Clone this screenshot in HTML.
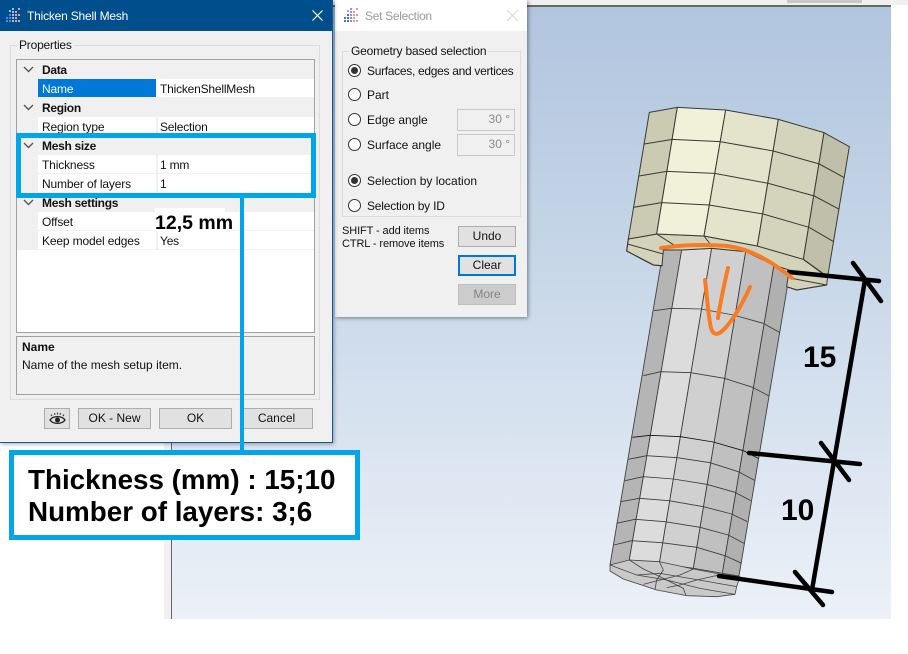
<!DOCTYPE html>
<html lang="en">
<head>
<meta charset="utf-8">
<title>Thicken Shell Mesh</title>
<style>
html,body{margin:0;padding:0;background:#fff;}
body{position:relative;width:908px;height:654px;overflow:hidden;font-family:"Liberation Sans",sans-serif;font-size:12px;color:#111;}
.a{position:absolute;box-sizing:border-box;white-space:nowrap;}
.t{position:absolute;white-space:nowrap;line-height:14px;}
.row{position:absolute;left:0;width:297px;height:19px;background:#fff;border-bottom:1px solid #f0f0f0;box-sizing:border-box;}
.row.h{background:#f0f0f0;border:0;}
.row .g{position:absolute;left:0;top:0;width:21px;height:19px;background:#f0f0f0;}
.row .n{position:absolute;left:25px;top:3px;line-height:14px;white-space:nowrap;letter-spacing:-.15px;}
.row .v{position:absolute;left:143px;top:3px;line-height:14px;white-space:nowrap;letter-spacing:-.2px;}
.row .d{position:absolute;left:139px;top:0;width:2px;height:18px;background:#f0f0f0;}
.row.h b{position:absolute;left:25px;top:3px;line-height:14px;white-space:nowrap;letter-spacing:-.3px;}
.row.h svg{position:absolute;left:6px;top:6px;}
.btn{position:absolute;box-sizing:border-box;background:#e1e1e1;border:1px solid #adadad;text-align:center;line-height:19px;white-space:nowrap;}
.radio{position:absolute;box-sizing:border-box;width:13px;height:13px;border-radius:50%;background:#fff;border:1px solid #333;}
.radio.on:after{content:"";position:absolute;left:2px;top:2px;width:7px;height:7px;border-radius:50%;background:#333;}
.inp{position:absolute;left:122px;box-sizing:border-box;width:58px;height:22px;border:1px solid #c8c8c8;background:#f0f0f0;color:#8a8a8a;text-align:right;padding-right:4px;line-height:19px;}
</style>
</head>
<body>

<!-- application chrome -->
<div class="a" style="left:0;top:0;width:908px;height:5px;background:#f0f0f0;"></div>
<div class="a" style="left:787px;top:0;width:75px;height:3px;background:#c8c8c8;"></div>
<div class="a" style="left:164px;top:5px;width:727px;height:2px;background:#666;"></div>
<div class="a" style="left:164px;top:5px;width:7px;height:614px;background:#f0f0f0;"></div>
<div class="a" style="left:171px;top:5px;width:1px;height:614px;background:#666;"></div>
<div class="a" style="left:172px;top:7px;width:719px;height:612px;background:linear-gradient(#b1c5df,#c9d8e9 45%,#ecf1f8);"></div>

<!-- 3D model and annotations -->
<svg class="a" style="left:0;top:0;" width="908" height="654" viewBox="0 0 908 654">
  <!-- shaft -->
  <g transform="translate(590,290) scale(.33333)" stroke="#3c3c3c" stroke-width="2.600" stroke-linejoin="round">
    <polygon fill="#b5b5b5" points="220,-120 275,-120 117,815 60,825"/>
    <polygon fill="#dcdcdc" points="275,-120 365,-125 208,820 117,815"/>
    <polygon fill="#d0d0d0" points="365,-125 467,-115 310,835 208,820"/>
    <polygon fill="#c0c0c0" points="467,-115 552,-75 397,850 310,835"/>
    <polygon fill="#b0b0b0" points="552,-75 597,-40 447,858 397,850"/>
    <g fill="none">
      <polyline points="192,62 245,55 333,57 430,75 520,100 570,128"/>
      <polyline points="160,257 212,245 302,248 403,265 488,292 537,318"/>
      <polyline stroke="#111" points="127,442 180,436 272,440 370,456 460,482 505,505"/>
      <polyline points="115,508 170,497 262,503 360,518 445,545 495,572"/>
      <polyline points="105,572 160,560 250,567 350,583 435,607 482,632"/>
      <polyline points="92,635 148,625 237,632 340,650 425,672 472,695"/>
      <polyline points="80,700 135,688 225,695 330,712 415,735 462,760"/>
      <polyline points="72,765 125,752 215,758 320,772 405,797 455,820"/>
    </g>
  </g>
  <!-- shaft end cap -->
  <g transform="translate(600,555) scale(.33333)" stroke="#444" stroke-width="2.400" fill="none" stroke-linejoin="round">
    <polygon fill="#c9c9c9" points="30,30 88,15 178,20 280,42 365,58 420,65 410,95 405,118 350,125 260,122 170,105 70,72 30,48"/>
    <polyline points="30,30 110,60 200,75 300,100 405,118"/>
    <polyline points="88,15 130,42 180,65 250,100 258,122"/>
    <polyline points="178,20 190,45 170,75 165,103"/>
    <polyline points="280,42 240,60 180,75 130,88"/>
    <polyline points="365,58 290,75 240,90 200,98"/>
    <polyline points="110,60 180,55 280,72 410,95"/>
  </g>
  <!-- head -->
  <g transform="translate(600,90) scale(.33333)" stroke="#3a3a32" stroke-width="3" stroke-linejoin="round">
    <polygon fill="#d3d2bb" points="85,447 170,432 312,438 472,468 610,508 683,560 680,585 590,600 560,590 567,540 522,525 438,485 336,475 245,480 190,480 186,527 160,525 80,483"/>
    <polygon fill="#cbcab3" points="148,67 232,52 170,432 85,447"/>
    <polygon fill="#f1f1d9" points="232,52 377,60 312,438 170,432"/>
    <polygon fill="#e4e4cd" points="377,60 535,88 472,468 312,438"/>
    <polygon fill="#d4d4bd" points="535,88 672,128 610,508 472,468"/>
    <polygon fill="#c0bfaa" points="672,128 748,170 683,560 610,508"/>
    <g fill="none">
      <polyline points="133,162 217,148 360,155 520,183 658,222 733,263"/>
      <polyline points="117,258 200,244 344,250 505,280 643,318 718,358"/>
      <polyline points="100,352 185,338 327,345 489,372 627,412 701,455"/>
      <polyline points="85,447 80,483 160,525 188,528"/>
      <polyline points="82,462 190,492"/>
      <polyline points="170,432 230,470"/>
      <polyline points="312,438 335,468"/>
      <polyline points="610,508 680,560"/>
      <polyline points="575,565 680,585"/>
      <polyline points="560,590 590,600 680,585"/>
    </g>
  </g>
  <!-- black dimension lines -->
  <g stroke="#000" stroke-width="4.500" stroke-linecap="round" fill="none">
    <line x1="789" y1="272" x2="879" y2="281"/>
    <line x1="853" y1="263" x2="881" y2="301"/>
    <line x1="865" y1="280" x2="812" y2="590"/>
    <line x1="749" y1="453" x2="860" y2="464"/>
    <line x1="821" y1="443" x2="849" y2="480"/>
    <line x1="719" y1="576" x2="832" y2="592"/>
    <line x1="795" y1="572" x2="823" y2="605"/>
  </g>
  <!-- orange markup -->
  <g stroke="#f97c22" stroke-width="4" stroke-linecap="round" stroke-linejoin="round" fill="none">
    <path d="M661,248 C680,245 705,244 727,246 C750,249 770,260 792,278"/>
    <path d="M705,280 C707,295 708,315 711,328 C713,335 717,335 721,332 C730,325 742,305 750,287"/>
    <path d="M728,268 C724,285 720,305 718,318"/>
  </g>
  <text x="803" y="367" font-family="Liberation Sans" font-weight="700" font-size="30" fill="#000">15</text>
  <text x="781" y="520" font-family="Liberation Sans" font-weight="700" font-size="30" fill="#000">10</text>
</svg>

<!-- Set Selection dialog -->
<div class="a" style="left:335px;top:0;width:192px;height:317px;background:#f0f0f0;box-shadow:1px 1px 4px rgba(0,0,0,.45);">
  <div class="a" style="left:0;top:0;width:192px;height:31px;background:#fff;"></div>
  <svg class="a" style="left:9px;top:7px;" width="16" height="16" viewBox="0 0 16 16">
    <g fill="#4a6fc0"><rect x="0" y="10" width="2" height="2"/><rect x="0" y="13" width="2" height="2"/><rect x="3" y="7" width="2" height="2"/><rect x="3" y="10" width="2" height="2"/><rect x="3" y="13" width="2" height="2"/><rect x="3" y="3" width="2" height="2" fill="#8fa8dd"/></g>
    <g fill="#9c8fc8"><rect x="6" y="1" width="2" height="2"/><rect x="6" y="4" width="2" height="2"/><rect x="6" y="7" width="2" height="2"/><rect x="6" y="10" width="2" height="2"/><rect x="6" y="13" width="2" height="2"/></g>
    <g fill="#dc9aa0"><rect x="9" y="4" width="2" height="2"/><rect x="9" y="7" width="2" height="2"/><rect x="9" y="10" width="2" height="2"/><rect x="9" y="13" width="2" height="2"/><rect x="12" y="1" width="2" height="2"/><rect x="12" y="7" width="2" height="2"/><rect x="12" y="13" width="2" height="2"/></g>
  </svg>
  <div class="t" style="left:30px;top:9px;color:#9a9a9a;letter-spacing:-.3px;">Set Selection</div>
  <svg class="a" style="left:171px;top:9px;" width="13" height="13" viewBox="0 0 13 13"><path d="M1 1L12 12M12 1L1 12" stroke="#dcdcdc" stroke-width="1.200"/></svg>
  <div class="a" style="left:7px;top:51px;width:179px;height:166px;border:1px solid #dcdcdc;"></div>
  <div class="t" style="left:14px;top:44px;background:#f0f0f0;padding:0 2px;letter-spacing:-.17px;">Geometry based selection</div>
  <div class="radio on" style="left:13px;top:64px;"></div><div class="t" style="left:32px;top:64px;letter-spacing:-.3px;">Surfaces, edges and vertices</div>
  <div class="radio" style="left:13px;top:88px;"></div><div class="t" style="left:32px;top:88px;">Part</div>
  <div class="radio" style="left:13px;top:113px;"></div><div class="t" style="left:32px;top:113px;">Edge angle</div>
  <div class="inp" style="top:109px;">30 °</div>
  <div class="radio" style="left:13px;top:138px;"></div><div class="t" style="left:32px;top:138px;">Surface angle</div>
  <div class="inp" style="top:134px;">30 °</div>
  <div class="radio on" style="left:13px;top:174px;"></div><div class="t" style="left:32px;top:174px;">Selection by location</div>
  <div class="radio" style="left:13px;top:199px;"></div><div class="t" style="left:32px;top:199px;letter-spacing:-.2px;">Selection by ID</div>
  <div class="t" style="left:7px;top:225px;line-height:13px;font-size:11px;letter-spacing:-.1px;">SHIFT - add items<br>CTRL - remove items</div>
  <div class="btn" style="left:123px;top:226px;width:58px;height:21px;">Undo</div>
  <div class="btn" style="left:123px;top:255px;width:58px;height:21px;border:2px solid #0078d7;line-height:17px;">Clear</div>
  <div class="btn" style="left:123px;top:284px;width:58px;height:21px;background:#ccc;border-color:#bfbfbf;color:#838383;">More</div>
</div>

<!-- Thicken Shell Mesh dialog -->
<div class="a" style="left:0;top:0;width:333px;height:443px;background:#f0f0f0;border-right:1px solid #0a5c9e;border-bottom:1px solid #0a5c9e;box-shadow:1px 1px 4px rgba(0,0,0,.35);">
  <div class="a" style="left:0;top:0;width:332px;height:31px;background:#004e8c;"></div>
  <svg class="a" style="left:6px;top:7px;" width="16" height="16" viewBox="0 0 16 16">
    <g fill="#5d86d8"><rect x="0" y="10" width="2" height="2"/><rect x="0" y="13" width="2" height="2"/><rect x="3" y="7" width="2" height="2"/><rect x="3" y="10" width="2" height="2"/><rect x="3" y="13" width="2" height="2"/><rect x="3" y="3" width="2" height="2" fill="#a8bfe8"/></g>
    <g fill="#b6b2df"><rect x="6" y="1" width="2" height="2"/><rect x="6" y="4" width="2" height="2"/><rect x="6" y="7" width="2" height="2"/><rect x="6" y="10" width="2" height="2"/><rect x="6" y="13" width="2" height="2"/></g>
    <g fill="#e0a0a6"><rect x="9" y="4" width="2" height="2"/><rect x="9" y="7" width="2" height="2"/><rect x="9" y="10" width="2" height="2"/><rect x="9" y="13" width="2" height="2"/><rect x="12" y="1" width="2" height="2"/><rect x="12" y="7" width="2" height="2"/><rect x="12" y="13" width="2" height="2"/></g>
  </svg>
  <div class="t" style="left:27px;top:9px;color:#fff;letter-spacing:-.2px;">Thicken Shell Mesh</div>
  <svg class="a" style="left:311px;top:9px;" width="13" height="13" viewBox="0 0 13 13"><path d="M1.500 1.500L11.500 11.500M11.500 1.500L1.500 11.500" stroke="#fff" stroke-width="1.200"/></svg>

  <div class="a" style="left:10px;top:45px;width:310px;height:355px;border:1px solid #dcdcdc;"></div>
  <div class="t" style="left:17px;top:38px;background:#f0f0f0;padding:0 2px;letter-spacing:-.2px;">Properties</div>

  <div class="a" style="left:16px;top:59px;width:299px;height:274px;background:#fff;border:1px solid #a0a0a0;">
    <div class="row h" style="top:0;"><svg width="11" height="7" viewBox="0 0 11 7"><path d="M1 1L5.500 5.500L10 1" fill="none" stroke="#555" stroke-width="1.400"/></svg><b>Data</b></div>
    <div class="row" style="top:19px;"><div class="g"></div><div class="a" style="left:21px;top:0;width:118px;height:18px;background:#0078d7;"></div><div class="n" style="color:#fff;">Name</div><div class="v">ThickenShellMesh</div></div>
    <div class="row h" style="top:38px;"><svg width="11" height="7" viewBox="0 0 11 7"><path d="M1 1L5.500 5.500L10 1" fill="none" stroke="#555" stroke-width="1.400"/></svg><b>Region</b></div>
    <div class="row" style="top:57px;"><div class="g"></div><div class="d"></div><div class="n">Region type</div><div class="v">Selection</div></div>
    <div class="row h" style="top:76px;"><svg width="11" height="7" viewBox="0 0 11 7"><path d="M1 1L5.500 5.500L10 1" fill="none" stroke="#555" stroke-width="1.400"/></svg><b>Mesh size</b></div>
    <div class="row" style="top:95px;"><div class="g"></div><div class="d"></div><div class="n">Thickness</div><div class="v">1 mm</div></div>
    <div class="row" style="top:114px;"><div class="g"></div><div class="d"></div><div class="n">Number of layers</div><div class="v">1</div></div>
    <div class="row h" style="top:133px;"><svg width="11" height="7" viewBox="0 0 11 7"><path d="M1 1L5.500 5.500L10 1" fill="none" stroke="#555" stroke-width="1.400"/></svg><b>Mesh settings</b></div>
    <div class="row" style="top:152px;"><div class="g"></div><div class="d"></div><div class="n">Offset</div></div>
    <div class="row" style="top:171px;"><div class="g"></div><div class="d"></div><div class="n">Keep model edges</div><div class="v">Yes</div></div>
  </div>

  <div class="a" style="left:16px;top:336px;width:299px;height:59px;border:1px solid #a0a0a0;">
    <b class="t" style="left:5px;top:3px;">Name</b>
    <div class="t" style="left:5px;top:21px;">Name of the mesh setup item.</div>
  </div>

  <div class="btn" style="left:44px;top:408px;width:26px;height:21px;">
    <svg class="a" style="left:4px;top:3px;" width="17" height="14" viewBox="0 0 17 14"><path d="M1 8C4 3.500 13 3.500 16 8C13 12.500 4 12.500 1 8Z" fill="none" stroke="#222" stroke-width="1.300"/><circle cx="8.500" cy="8" r="2.500" fill="#222"/><path d="M3 4L2 2.500M6 2.800L5.500 1M8.500 2.500V.6M11 2.800L11.500 1M14 4L15 2.500" stroke="#222" stroke-width="1"/></svg>
  </div>
  <div class="btn" style="left:78px;top:408px;width:73px;height:21px;">OK - New</div>
  <div class="btn" style="left:159px;top:408px;width:73px;height:21px;">OK</div>
  <div class="btn" style="left:240px;top:408px;width:73px;height:21px;">Cancel</div>
</div>

<!-- blue callouts -->
<div class="a" style="left:16px;top:133px;width:300px;height:65px;border:5px solid #00a6e9;"></div>
<div class="a" style="left:240px;top:198px;width:4px;height:252px;background:#00a6e9;"></div>
<div class="a" style="left:155px;top:208px;width:70px;height:24px;background:#fff;"></div>
<div class="t" style="left:155px;top:212px;font-size:19.500px;line-height:22px;font-weight:700;color:#000;">12,5 mm</div>
<div class="a" style="left:9px;top:450px;width:351px;height:90px;background:#fff;border:5px solid #00a6e9;"></div>
<div class="t" style="left:28px;top:464px;font-size:27.800px;line-height:32px;font-weight:700;color:#000;">Thickness (mm) : 15;10</div>
<div class="t" style="left:28px;top:496px;font-size:27.800px;line-height:32px;font-weight:700;color:#000;">Number of layers: 3;6</div>

</body>
</html>
